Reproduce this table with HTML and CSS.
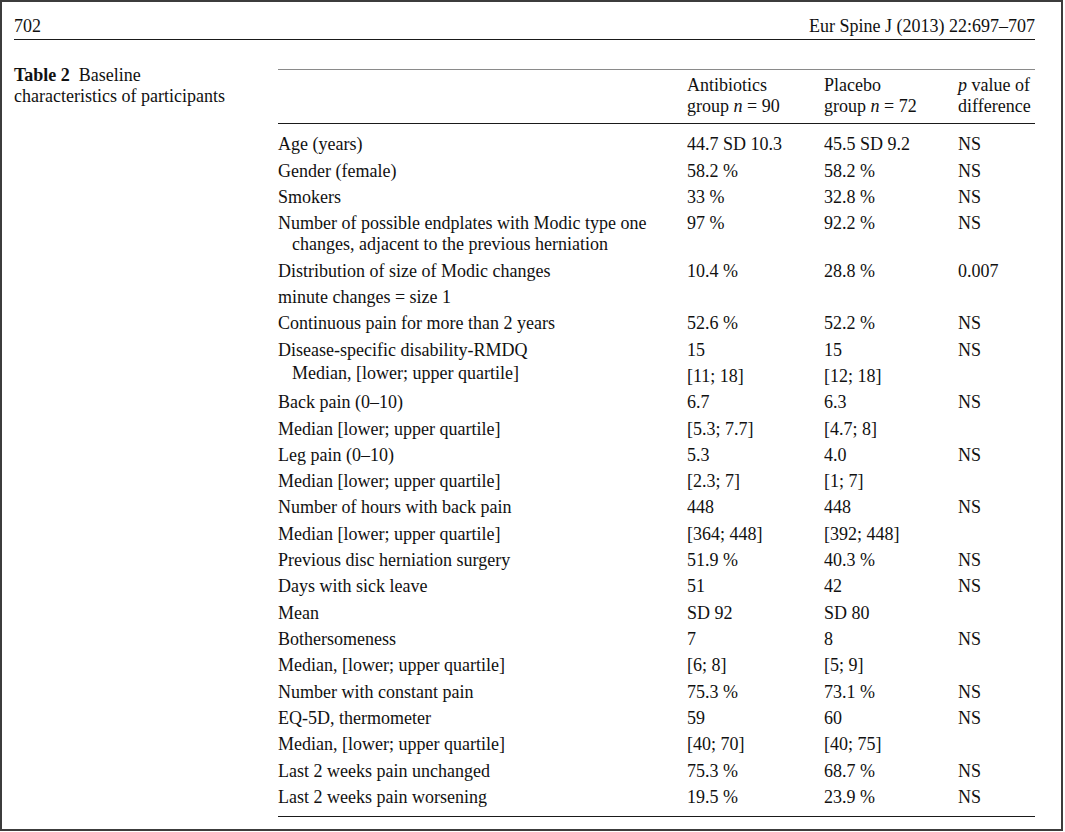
FILE: index.html
```html
<!DOCTYPE html>
<html>
<head>
<meta charset="utf-8">
<link rel="stylesheet" href="styles.css">
</head>
<body>
<div class="frame">
  <header class="running">
    <span>702</span>
    <span>Eur Spine J (2013) 22:697–707</span>
  </header>
  <div class="content">
    <div class="caption"><b>Table 2</b>&nbsp; Baseline<br>characteristics of participants</div>
    <div class="table">
      <div class="thead row">
        <div></div>
        <div>Antibiotics<br>group <i>n</i> = 90</div>
        <div>Placebo<br>group <i>n</i> = 72</div>
        <div><i>p</i> value of<br>difference</div>
      </div>
      <div class="tbody">
        <div class="row"><div>Age (years)</div><div>44.7 SD 10.3</div><div>45.5 SD 9.2</div><div>NS</div></div>
        <div class="row"><div>Gender (female)</div><div>58.2 %</div><div>58.2 %</div><div>NS</div></div>
        <div class="row"><div>Smokers</div><div>33 %</div><div>32.8 %</div><div>NS</div></div>
        <div class="row"><div class="hang">Number of possible endplates with Modic type one changes, adjacent to the previous herniation</div><div>97 %</div><div>92.2 %</div><div>NS</div></div>
        <div class="row"><div>Distribution of size of Modic changes</div><div>10.4 %</div><div>28.8 %</div><div>0.007</div></div>
        <div class="row"><div>minute changes = size 1</div><div></div><div></div><div></div></div>
        <div class="row"><div>Continuous pain for more than 2 years</div><div>52.6 %</div><div>52.2 %</div><div>NS</div></div>
        <div class="row two"><div class="lbl2">Disease-specific disability-RMDQ<br><span class="ind">Median, [lower; upper quartile]</span></div><div>15<br>[11; 18]</div><div>15<br>[12; 18]</div><div>NS</div></div>
        <div class="row"><div>Back pain (0–10)</div><div>6.7</div><div>6.3</div><div>NS</div></div>
        <div class="row"><div>Median [lower; upper quartile]</div><div>[5.3; 7.7]</div><div>[4.7; 8]</div><div></div></div>
        <div class="row"><div>Leg pain (0–10)</div><div>5.3</div><div>4.0</div><div>NS</div></div>
        <div class="row"><div>Median [lower; upper quartile]</div><div>[2.3; 7]</div><div>[1; 7]</div><div></div></div>
        <div class="row"><div>Number of hours with back pain</div><div>448</div><div>448</div><div>NS</div></div>
        <div class="row"><div>Median [lower; upper quartile]</div><div>[364; 448]</div><div>[392; 448]</div><div></div></div>
        <div class="row"><div>Previous disc herniation surgery</div><div>51.9 %</div><div>40.3 %</div><div>NS</div></div>
        <div class="row"><div>Days with sick leave</div><div>51</div><div>42</div><div>NS</div></div>
        <div class="row"><div>Mean</div><div>SD 92</div><div>SD 80</div><div></div></div>
        <div class="row"><div>Bothersomeness</div><div>7</div><div>8</div><div>NS</div></div>
        <div class="row"><div>Median, [lower; upper quartile]</div><div>[6; 8]</div><div>[5; 9]</div><div></div></div>
        <div class="row"><div>Number with constant pain</div><div>75.3 %</div><div>73.1 %</div><div>NS</div></div>
        <div class="row"><div>EQ-5D, thermometer</div><div>59</div><div>60</div><div>NS</div></div>
        <div class="row"><div>Median, [lower; upper quartile]</div><div>[40; 70]</div><div>[40; 75]</div><div></div></div>
        <div class="row"><div>Last 2 weeks pain unchanged</div><div>75.3 %</div><div>68.7 %</div><div>NS</div></div>
        <div class="row"><div>Last 2 weeks pain worsening</div><div>19.5 %</div><div>23.9 %</div><div>NS</div></div>
      </div>
    </div>
  </div>
</div>
</body>
</html>
```

FILE: styles.css
```css
html, body {
  margin: 0;
  padding: 0;
  background: #ffffff;
}

body {
  font-family: "Liberation Serif", "Times New Roman", serif;
  font-size: 18px;
  color: #111111;
}

.frame {
  box-sizing: border-box;
  width: 1063px;
  height: 831px;
  border: 2px solid #3c3c3c;
  padding: 0 26px 0 12px;
  background: #fff;
}

.running {
  display: flex;
  justify-content: space-between;
  align-items: flex-end;
  height: 38px;
  line-height: 21px;
  box-sizing: border-box;
  padding-bottom: 2px;
  border-bottom: 1.5px solid #1a1a1a;
}

.content {
  display: flex;
  padding-top: 29px;
}

.caption {
  width: 264px;
  flex: none;
  line-height: 21px;
  margin-top: -4px;
}

.caption b {
  font-weight: bold;
}

.table {
  flex: 1;
  border-top: 1.5px solid #8a8a8a;
  border-bottom: 1.5px solid #1a1a1a;
}

.row {
  display: grid;
  grid-template-columns: 409px 137px 134px 1fr;
  line-height: 21px;
}

.row > div {
  padding: 2.66px 0;
  white-space: nowrap;
}

.row > .hang {
  white-space: normal;
  padding-left: 14px;
  text-indent: -14px;
}

.thead {
  padding: 5px 0 5.5px;
  border-bottom: 1.5px solid #1a1a1a;
}

.thead > div {
  padding: 0;
}

.tbody {
  padding: 8.3px 0 5px;
}

.two > div {
  line-height: 26.3px;
  padding: 0;
}

.two > .lbl2 {
  line-height: 23px;
  padding-top: 2px;
}

.ind {
  padding-left: 14px;
}
```
